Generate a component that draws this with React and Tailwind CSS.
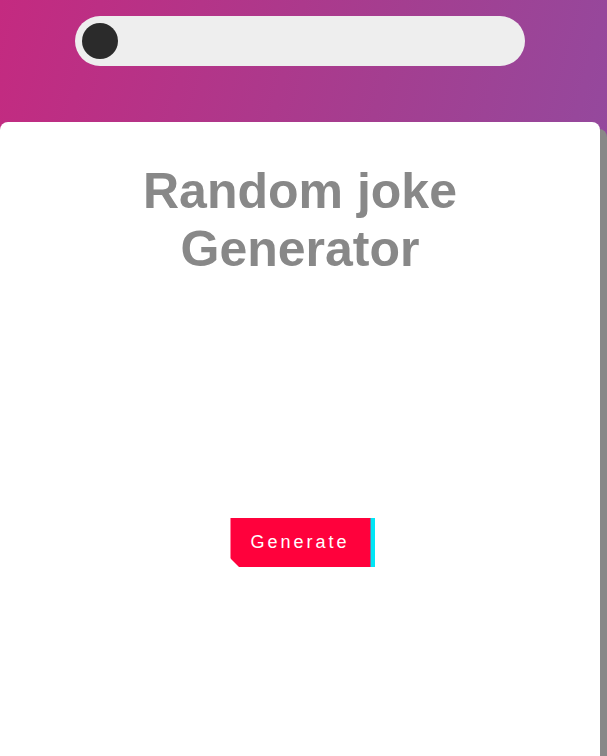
import React from 'react';

const App = () => {
  return (
    <div className="h-[756px] w-[607px] overflow-hidden bg-[linear-gradient(105deg,#c42a80_0%,#a43e90_50%,#8a50a6_100%)] font-['Liberation_Sans',Arial,sans-serif]">
      <div className="w-[600px]">
        {/* top bar with theme toggle */}
        <div className="flex h-[122px] justify-center pt-4">
          <div className="flex h-[50px] w-[450px] items-center rounded-full bg-[#eeeeee] px-[7px]">
            <span className="block h-9 w-9 rounded-full bg-[#2b2b2b]" />
          </div>
        </div>

        {/* card */}
        <div className="flex h-[660px] flex-col items-center rounded-t-lg bg-white px-10 pt-[40px] shadow-[7px_7px_0_#888888]">
          <h1 className="text-center text-[50px] font-bold leading-[58px] text-[#888888]">
            Random joke Generator
          </h1>
          <p className="h-[240px]"></p>
          <button className="h-[49px] w-[145px] translate-x-[2.5px] border-r-[5px] border-[#00e6f6] bg-[#ff013c] text-[18px] tracking-[3px] text-white [clip-path:polygon(0_0,100%_0,100%_100%,9px_100%,0_calc(100%-9px))]">
            Generate
          </button>
        </div>
      </div>
    </div>
  );
};

export default App;
